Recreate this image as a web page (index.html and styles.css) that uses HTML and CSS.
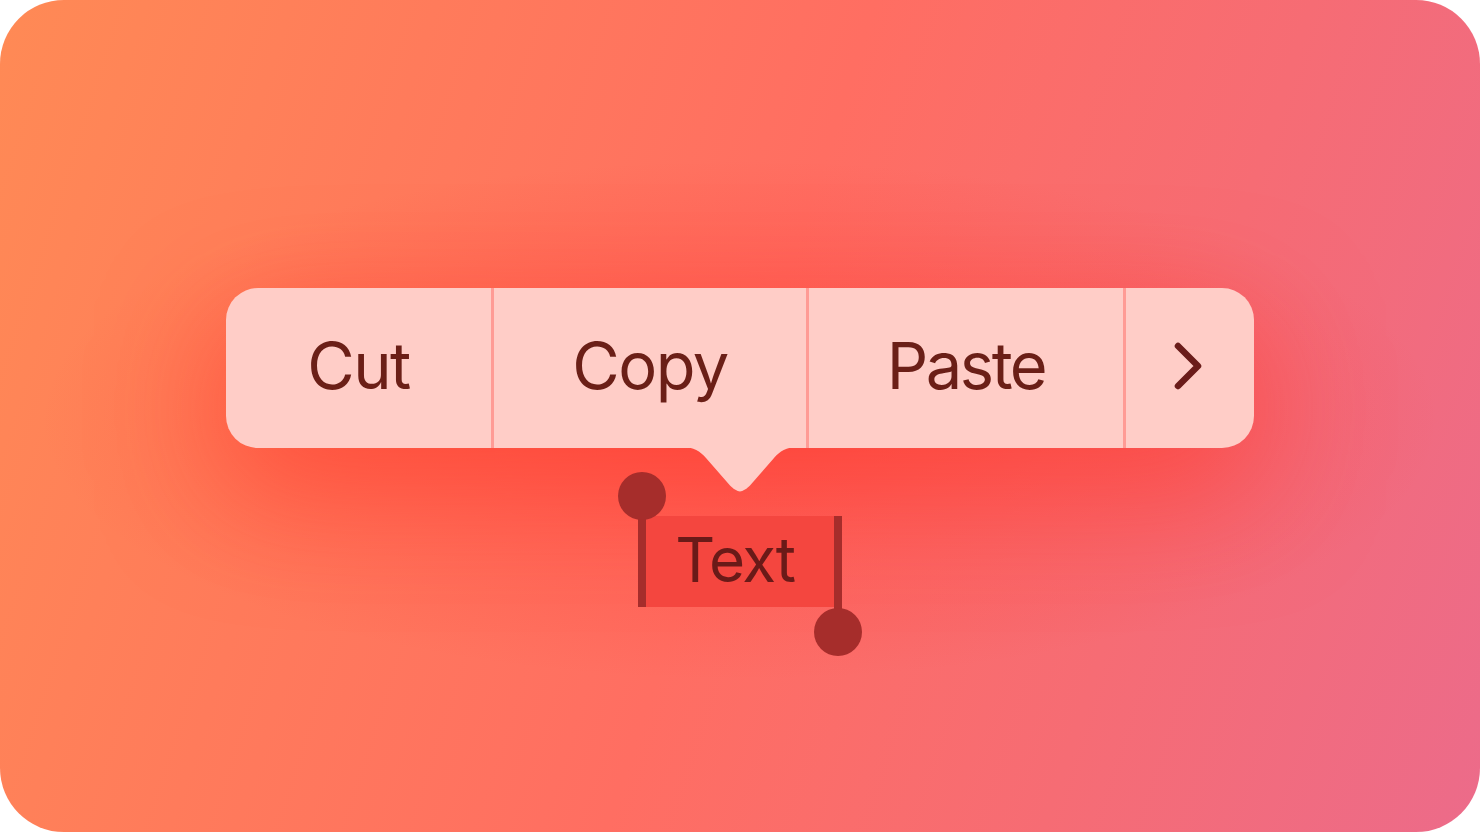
FILE: index.html
```html
<!DOCTYPE html>
<html lang="en">
<head>
<meta charset="utf-8">
<title>Text selection menu</title>
<link rel="stylesheet" href="styles.css">
</head>
<body>
<div class="card">
  <div class="menu">
    <div class="item item-cut"><span class="label">Cut</span></div>
    <div class="item item-copy"><span class="label">Copy</span></div>
    <div class="item item-paste"><span class="label">Paste</span></div>
    <div class="item item-more">
      <svg class="chevron" width="30" height="50" viewBox="0 0 30 50" aria-hidden="true">
        <path d="M5 5 L25 25 L5 45" fill="none" stroke="#6b1c1a" stroke-width="6.5" stroke-linecap="round" stroke-linejoin="round"/>
      </svg>
    </div>
    <svg class="pointer" width="116" height="46" viewBox="0 0 116 46" aria-hidden="true">
      <path d="M0 0 C 12 0 18 4.2 24 11 L 48 38.5 C 50.5 41.3 55.5 44.5 58 44.5 C 60.5 44.5 65.5 41.3 68 38.5 L 92 11 C 98 4.2 104 0 116 0 Z"/>
    </svg>
  </div>
  <div class="selection">
    <span class="handle handle-start"></span>
    <span class="sel-text">Text</span>
    <span class="handle handle-end"></span>
  </div>
</div>
</body>
</html>
```

FILE: styles.css
```css
html, body {
  margin: 0;
  padding: 0;
  background: #ffffff;
}

.card {
  width: 1480px;
  height: 832px;
  box-sizing: border-box;
  padding-top: 288px;
  border-radius: 64px;
  overflow: hidden;
  display: flex;
  flex-direction: column;
  align-items: center;
  background:
    radial-gradient(ellipse 700px 260px at 740px 420px, rgba(255, 60, 55, 0.5), rgba(255, 60, 55, 0) 100%),
    linear-gradient(108deg, #ff8a55 0%, #ff7b5b 25%, #ff6e62 50%, #f66c74 75%, #ec6b8a 100%);
  font-family: Inter, "Noto Sans", "Liberation Sans", sans-serif;
}

.menu {
  position: relative;
  display: flex;
  width: 1028px;
  height: 160px;
  border-radius: 32px;
  background: #ffcdc7;
  box-shadow: 0 40px 120px rgba(255, 55, 40, 0.55);
}

.item {
  display: flex;
  align-items: center;
  justify-content: center;
  color: #6b1f17;
  font-size: 65px;
  font-weight: 400;
}

.label {
  margin-top: -6px;
  letter-spacing: -1.5px;
}

.item-paste .label {
  letter-spacing: -2.5px;
}

.item + .item {
  border-left: 3px solid #ff9b95;
}

.item-cut { width: 265px; }
.item-copy { width: 312px; }
.item-paste { width: 314px; }
.item-more { width: 128px; }

.chevron {
  display: block;
  margin-left: -4px;
  margin-top: -4px;
}

.pointer {
  position: absolute;
  left: 456px;
  top: 159px;
  fill: #ffcdc7;
}

.selection {
  position: relative;
  margin-top: 68px;
  width: 196px;
  height: 91px;
  background: #f4463f;
  display: flex;
  align-items: center;
  justify-content: center;
}

.sel-text {
  color: #6a1a18;
  font-size: 62px;
  letter-spacing: -1.5px;
  margin-left: -10px;
  margin-top: -4px;
}

.handle {
  position: absolute;
  width: 8px;
  background: #a62d2b;
}

.handle::before {
  content: "";
  position: absolute;
  left: -20px;
  width: 48px;
  height: 48px;
  border-radius: 50%;
  background: #a62d2b;
}

.handle-start {
  left: -4px;
  top: -20px;
  height: 111px;
}

.handle-start::before {
  top: -24px;
}

.handle-end {
  right: -4px;
  top: 0;
  height: 116px;
}

.handle-end::before {
  bottom: -24px;
}
```
